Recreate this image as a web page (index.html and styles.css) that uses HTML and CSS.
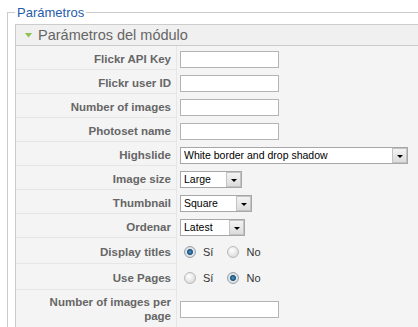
FILE: index.html
```html
<!DOCTYPE html>
<html lang="es">
<head>
    <meta charset="UTF-8">
    <meta name="viewport" content="width=device-width, initial-scale=1.0">
    <title>Parámetros del módulo</title>
    <link rel="stylesheet" href="styles.css">
</head>
<body>
    <fieldset class="params">
        <legend>Parámetros</legend>

        <div class="pane">
            <h3 class="pane-title">
                <svg class="arrow" width="7" height="5" viewBox="0 0 7 5"><polygon points="0,0 7,0 3.5,4.5" fill="#8cc152"/></svg>
                Parámetros del módulo
            </h3>

            <table class="paramlist">
                <tr>
                    <td class="key">Flickr API Key</td>
                    <td class="value"><input type="text" class="text"></td>
                </tr>
                <tr>
                    <td class="key">Flickr user ID</td>
                    <td class="value"><input type="text" class="text"></td>
                </tr>
                <tr>
                    <td class="key">Number of images</td>
                    <td class="value"><input type="text" class="text"></td>
                </tr>
                <tr>
                    <td class="key">Photoset name</td>
                    <td class="value"><input type="text" class="text"></td>
                </tr>
                <tr>
                    <td class="key">Highslide</td>
                    <td class="value">
                        <span class="select select-wide">
                            <select><option>White border and drop shadow</option></select>
                            <span class="select-btn"></span>
                        </span>
                    </td>
                </tr>
                <tr>
                    <td class="key">Image size</td>
                    <td class="value">
                        <span class="select select-size">
                            <select><option>Large</option></select>
                            <span class="select-btn"></span>
                        </span>
                    </td>
                </tr>
                <tr>
                    <td class="key">Thumbnail</td>
                    <td class="value">
                        <span class="select select-thumb">
                            <select><option>Square</option></select>
                            <span class="select-btn"></span>
                        </span>
                    </td>
                </tr>
                <tr>
                    <td class="key">Ordenar</td>
                    <td class="value">
                        <span class="select select-order">
                            <select><option>Latest</option></select>
                            <span class="select-btn"></span>
                        </span>
                    </td>
                </tr>
                <tr class="radio-row">
                    <td class="key">Display titles</td>
                    <td class="value">
                        <label class="radio"><input type="radio" name="titles" checked> Sí</label>
                        <label class="radio"><input type="radio" name="titles"> No</label>
                    </td>
                </tr>
                <tr class="radio-row">
                    <td class="key">Use Pages</td>
                    <td class="value">
                        <label class="radio"><input type="radio" name="pages"> Sí</label>
                        <label class="radio"><input type="radio" name="pages" checked> No</label>
                    </td>
                </tr>
                <tr class="tall-row">
                    <td class="key">Number of images per page</td>
                    <td class="value"><input type="text" class="text"></td>
                </tr>
            </table>
        </div>
    </fieldset>
</body>
</html>
```

FILE: styles.css
```css
html, body {
    overflow: hidden;
}

body {
    margin: 0;
    background: #ffffff;
    font-family: 'Liberation Sans', Arial, sans-serif;
    font-size: 11px;
    color: #000;
}

.params {
    width: 640px;
    margin: 5px 0 0 7px;
    padding: 4px 0 0 7px;
    border: 1px solid #cccccc;
}

.params legend {
    padding: 0 2px;
    font-size: 13px;
    line-height: 15px;
    color: #1f5cab;
}

.pane {
    border: 1px solid #cccccc;
    background: #f4f4f4;
}

.pane-title {
    margin: 0;
    padding-left: 9px;
    height: 20px;
    line-height: 20px;
    font-size: 14.5px;
    font-weight: normal;
    color: #666666;
    background: #f0f0f0;
    border-bottom: 1px solid #cccccc;
    display: flex;
    align-items: center;
}

.pane-title .arrow {
    margin-right: 6px;
    margin-top: 1px;
}

.paramlist {
    border-collapse: separate;
    border-spacing: 0;
}

.paramlist td {
    box-sizing: border-box;
    height: 24px;
    padding-top: 3px;
    vertical-align: middle;
}

.paramlist td.key {
    width: 161px;
    padding: 3px 5px 0 15px;
    text-align: right;
    font-size: 11.5px;
    font-weight: bold;
    color: #666666;
    line-height: 14px;
    border-bottom: 1px solid #e6e6e6;
    border-right: 1px solid #e6e6e6;
}

.paramlist td.value {
    padding-left: 3px;
}

.paramlist .radio-row td {
    height: 26px;
}

.paramlist .radio-row td.value {
    padding-top: 4px;
}

.paramlist .tall-row td {
    height: 38px;
    padding-top: 1px;
}

input.text {
    box-sizing: border-box;
    width: 99px;
    height: 17px;
    margin: 0;
    padding: 0 2px;
    border: 1px solid #b4b4b4;
    background: #ffffff;
    display: block;
}

.select {
    position: relative;
    display: block;
    height: 17px;
}

.select select {
    appearance: none;
    -webkit-appearance: none;
    box-sizing: border-box;
    width: 100%;
    height: 17px;
    margin: 0;
    padding: 0 0 0 3px;
    border: 1px solid #a7a7a7;
    border-radius: 0;
    background: #ffffff;
    font-family: 'Liberation Sans', Arial, sans-serif;
    font-size: 10.5px;
    line-height: 15px;
    color: #000;
    outline: none;
}

.select-wide { width: 228px; }
.select-size { width: 62px; }
.select-thumb { width: 72px; }
.select-order { width: 65px; }

.select-btn {
    position: absolute;
    top: 1px;
    right: 1px;
    box-sizing: border-box;
    width: 15px;
    height: 15px;
    border: 1px solid #c3c3c3;
    background: linear-gradient(#f3f3f3, #dcdcdc);
    pointer-events: none;
}

.select-btn::after {
    content: "";
    position: absolute;
    left: 4px;
    top: 6px;
    border-left: 3px solid transparent;
    border-right: 3px solid transparent;
    border-top: 3px solid #000;
}

.radio {
    display: inline-flex;
    align-items: center;
    margin-right: 7px;
    color: #333;
}

.radio input {
    appearance: none;
    -webkit-appearance: none;
    box-sizing: border-box;
    width: 12px;
    height: 12px;
    margin: 0 7px 0 4px;
    border: 1px solid #b9b9b9;
    border-radius: 50%;
    background: radial-gradient(circle at 40% 35%, #ffffff 0%, #e6e6e6 55%, #cfcfcf 100%);
}

.radio input:checked {
    background: radial-gradient(circle at 50% 50%, #5f9fcc 0%, #1d5a86 30%, #2c5f85 38%, #e2e6ea 48%, #cdd3d8 100%);
    border-color: #9aa3aa;
}
```
